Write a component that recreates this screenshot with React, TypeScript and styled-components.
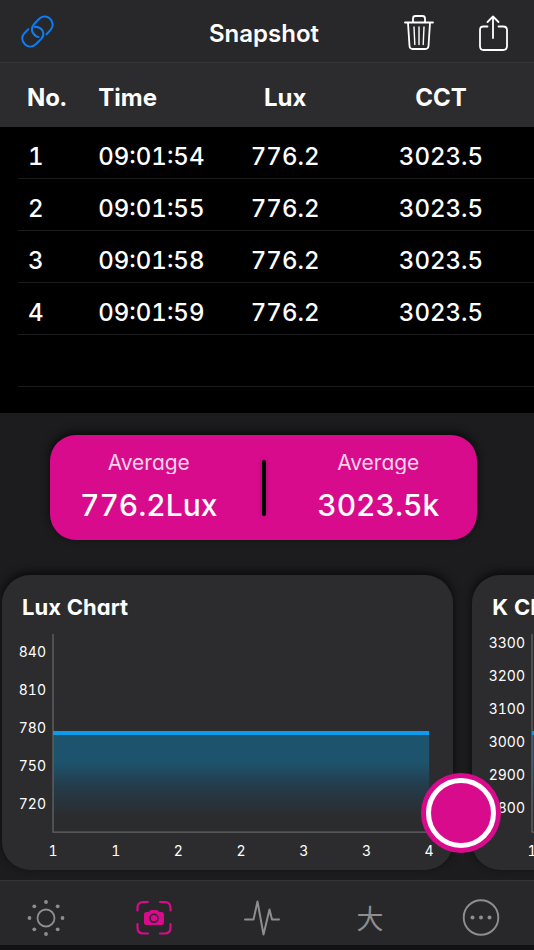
import React from "react";
import styled, { createGlobalStyle } from "styled-components";

const pink = "#d80b8c";
const hand = `"Chalkboard SE", Inter, "Open Sans", sans-serif`;

const GlobalStyle = createGlobalStyle`
  *, *::before { box-sizing: border-box; }
  body { margin: 0; background: #1c1c1e; color: #fff; font-family: ${hand}; font-feature-settings: "cv11", "tnum"; }
  button { border: 0; padding: 0; background: none; color: inherit; font: inherit; cursor: pointer; }
`;

const Page = styled.div`
  min-height: 100vh;
  display: flex;
  flex-direction: column;
  overflow: hidden;
`;

const TopBar = styled.header`
  height: 63px;
  padding: 0 24px 0 18px;
  display: grid;
  grid-template-columns: 1fr auto 1fr;
  align-items: center;
  background: #28282a;
  border-bottom: 1px solid #353537;
`;

const Title = styled.h1`
  margin: 5px 0 0;
  font: 600 24px/32px Inter, sans-serif;
`;

const Actions = styled.div<{ $end?: boolean }>`
  display: flex;
  gap: 40px;
  justify-content: ${(p) => (p.$end ? "flex-end" : "flex-start")};
`;

const IconButton = styled.button`
  height: 40px;
  margin-top: 2px;
  svg { display: block; }
`;

const TableArea = styled.section`
  background: #000;
  height: 350px;
`;

const Table = styled.table`
  width: 100%;
  table-layout: fixed;
  border-collapse: collapse;
  font-size: 24px;
  line-height: 32px;
  thead { background: #2c2c2e; }
  tbody tr {
    background: linear-gradient(#1b1b1d, #1b1b1d) right bottom / calc(100% - 18px) 1px no-repeat;
  }
`;

const Th = styled.th<{ $w?: string; $center?: boolean }>`
  width: ${(p) => p.$w ?? "auto"};
  height: 64px;
  padding: 5px 0 0;
  font-weight: 700;
  text-align: ${(p) => (p.$center ? "center" : "left")};
  &:first-child { padding-left: 27px; }
  &:last-child { padding-right: 12px; }
`;

const Td = styled.td<{ $center?: boolean }>`
  height: 52px;
  padding: 7px 0 0;
  font-weight: 500;
  text-align: ${(p) => (p.$center ? "center" : "left")};
  &:first-child { padding-left: 28px; }
  &:last-child { padding-right: 12px; }
`;

const Summary = styled.section`
  height: 105px;
  margin: 22px 57px 0 50px;
  display: grid;
  grid-template-columns: 1fr 4px 1fr;
  align-items: center;
  background: ${pink};
  border-radius: 26px;
  box-shadow: 0 -3px 8px #0a0a0b;
`;

const Divider = styled.div`
  height: 56px;
  border-radius: 2px;
  background: #000;
  box-shadow: 0 0 4px rgba(0, 0, 0, 0.3);
`;

const Stat = styled.div<{ $side: "left" | "right" }>`
  text-align: center;
  padding-${(p) => (p.$side === "left" ? "right" : "left")}: 14px;
`;

const StatLabel = styled.div`
  height: 24px;
  overflow: hidden;
  font-size: 21px;
  line-height: 26px;
  color: #f6d3e8;
`;

const StatValue = styled.div`
  margin-top: 11px;
  font-size: 30px;
  line-height: 40px;
  font-weight: 500;
`;

const Charts = styled.section`
  position: relative;
  margin-top: 35px;
  padding: 0 0 10px 2px;
  display: flex;
  gap: 19px;
`;

const Card = styled.article`
  flex: 0 0 calc(85% - 1px);
  background: #2c2c2e;
  border-radius: 28px;
  box-shadow: 0 -3px 8px #0a0a0b;
  overflow: hidden;
  svg { display: block; width: 100%; }
`;

const CardTitle = styled.h2`
  margin: 18px 20px 0;
  font-size: 22px;
  line-height: 28px;
  font-weight: 700;
`;

const Shutter = styled.button`
  position: absolute;
  right: 33px;
  bottom: 27px;
  width: 80px;
  height: 80px;
  display: grid;
  place-items: center;
  background: ${pink};
  border-radius: 50%;
  &::before {
    content: "";
    width: 70px;
    height: 70px;
    border: 5px solid #fff;
    border-radius: 50%;
  }
`;

const TabBar = styled.nav`
  height: 70px;
  margin-top: auto;
  display: grid;
  grid-template-columns: 100fr 108fr 108fr 108fr 110fr;
  background: #28282a;
  border-top: 1px solid #353537;
  border-bottom: 5px solid #121214;
`;

const Tab = styled.button<{ $active?: boolean }>`
  display: flex;
  justify-content: center;
  align-items: center;
  padding-top: 9px;
  color: ${(p) => (p.$active ? pink : "#8e8e91")};
  &:first-child { padding-right: 8px; }
  &:last-child { padding-left: 4px; }
`;

const Glyph = styled.span`
  font: 400 27px/36px "Noto Sans CJK SC", sans-serif;
`;

const LinkIcon = () => (
  <svg width="40" height="40" viewBox="0 0 40 40" fill="none" stroke="#0f7df2" strokeWidth="2" strokeLinecap="round">
    <path d="M17.2 23.4C12.7 20 13.3 15.6 16.1 12.2L20.5 7.5C23.7 4.2 28.3 3.4 31.6 6.3C35.5 9.6 35.7 14.5 32.6 17.9L28.6 22.2" />
    <path d="M20 15.2C26 17.4 26.7 23 23.5 26.6L18.4 31.8C14.8 35.3 10.3 35.4 7.1 32.5C3.5 29.2 3.3 24.6 6.4 21.2L10.4 17.1" />
    <path d="M17.2 23.4Q18.6 24.7 20.5 25M20 15.2Q18.4 14.6 16.8 15" />
  </svg>
);

const TrashIcon = () => (
  <svg width="34" height="40" viewBox="0 0 34 40" fill="none" stroke="#fff" strokeWidth="1.8" strokeLinecap="round" strokeLinejoin="round">
    <path d="M3 10.5H31M11 10V6.5Q11 4 13.5 4H20.5Q23 4 23 6.5V10M6 11L7.5 34Q7.8 37 10.5 37H23.5Q26.2 37 26.5 34L28 11" />
    <path d="M12 15L12.8 32.5M17 15V32.5M22 15L21.2 32.5" strokeWidth="1.4" />
  </svg>
);

const ShareIcon = () => (
  <svg width="34" height="40" viewBox="0 0 34 40" fill="none" stroke="#fff" strokeWidth="1.8" strokeLinecap="round" strokeLinejoin="round">
    <path d="M11.5 14.5H7.5Q4 14.5 4 18V34Q4 38 7.5 38H27Q31 38 31 34V18Q31 14.5 27 14.5H22.5M17 26V4.5M11.5 10L17 4.5L22.5 10" />
  </svg>
);

const SunIcon = () => (
  <svg width="38" height="38" viewBox="0 0 38 38" fill="currentColor">
    <circle cx="19" cy="19" r="8.5" fill="none" stroke="currentColor" strokeWidth="1.8" />
    {[[19, 3], [30.7, 7.3], [35.5, 19], [30.7, 30.3], [19, 35], [7.3, 30.3], [2.5, 19], [7.3, 7.3]].map(([x, y]) => (
      <circle key={`${x}-${y}`} cx={x} cy={y} r="1.9" />
    ))}
  </svg>
);

const CameraIcon = () => (
  <svg width="36" height="36" viewBox="0 0 36 36" fill="none" stroke="currentColor" strokeWidth="2.2" strokeLinecap="round">
    <path d="M1.5 10.5V8Q1.5 2 7.5 2H12M24 2H28.5Q34.5 2 34.5 8V10.5M34.5 24V27.5Q34.5 33.5 28.5 33.5H24M12 33.5H7.5Q1.5 33.5 1.5 27.5V24" />
    <path d="M8 14.5Q8 12 10.5 12H12.5L15 10H21L23.5 12H25.5Q28 12 28 14.5V22.5Q28 25 25.5 25H10.5Q8 25 8 22.5Z" fill="currentColor" stroke="none" />
    <circle cx="18" cy="18.3" r="4" stroke="#28282a" strokeWidth="1.5" />
  </svg>
);

const PulseIcon = () => (
  <svg width="38" height="38" viewBox="0 0 38 38" fill="none" stroke="currentColor" strokeWidth="2" strokeLinecap="round" strokeLinejoin="round">
    <path d="M2 20.5H10.5L14.5 2.5L20.5 35.5L26.5 10.5L29 20.5H36" />
  </svg>
);

const MoreIcon = () => (
  <svg width="38" height="38" viewBox="0 0 38 38" fill="currentColor">
    <circle cx="19" cy="18.5" r="17.3" fill="none" stroke="currentColor" strokeWidth="1.9" />
    <circle cx="10.5" cy="18.5" r="2" /><circle cx="19" cy="18.5" r="2" /><circle cx="27.5" cy="18.5" r="2" />
  </svg>
);

type ChartProps = { id: string; title: string; axis: number; first: number; step: number; labels: number[] };

const xLabels = [1, 1, 2, 2, 3, 3, 4];

const Chart = ({ id, title, axis, first, step, labels }: ChartProps) => {
  const end = 427;
  const gap = (end - axis) / (xLabels.length - 1);
  return (
    <Card>
      <CardTitle>{title}</CardTitle>
      <svg viewBox="0 0 451 249" role="img" aria-label={title} fill="#fff" fontSize="14">
        <defs>
          <linearGradient id={id} x1="0" y1="0" x2="0" y2="1">
            <stop offset="0" stopColor="#1e536d" />
            <stop offset="0.3" stopColor="#1e536d" />
            <stop offset="0.55" stopColor="#243b49" />
            <stop offset="0.85" stopColor="#2b2c2f" />
            <stop offset="1" stopColor="#2c2c2e" />
          </linearGradient>
        </defs>
        <rect x={axis} y="112" width={end - axis} height="98" fill={`url(#${id})`} />
        <path d={`M${axis} 13V211H${end}`} fill="none" stroke="#646467" strokeWidth="1.3" />
        <path d={`M${axis} 112H${end}`} stroke="#0d9cec" strokeWidth="4" />
        {labels.map((v, i) => (
          <text key={v} x={axis - 7} y={first + i * step} textAnchor="end">{v}</text>
        ))}
        {xLabels.map((v, i) => (
          <text key={i} x={axis + i * gap} y="235" textAnchor="middle">{v}</text>
        ))}
      </svg>
    </Card>
  );
};

const rows = ["09:01:54", "09:01:55", "09:01:58", "09:01:59"];

export default function App() {
  return (
    <Page>
      <GlobalStyle />
      <TopBar>
        <Actions><IconButton aria-label="Link"><LinkIcon /></IconButton></Actions>
        <Title>Snapshot</Title>
        <Actions $end>
          <IconButton aria-label="Delete"><TrashIcon /></IconButton>
          <IconButton aria-label="Share"><ShareIcon /></IconButton>
        </Actions>
      </TopBar>
      <TableArea>
        <Table>
          <thead>
            <tr><Th $w="18.4%">No.</Th><Th $w="21%">Time</Th><Th $w="28%" $center>Lux</Th><Th $center>CCT</Th></tr>
          </thead>
          <tbody>
            {rows.map((time, i) => (
              <tr key={time}><Td>{i + 1}</Td><Td>{time}</Td><Td $center>776.2</Td><Td $center>3023.5</Td></tr>
            ))}
            <tr><Td colSpan={4} /></tr>
          </tbody>
        </Table>
      </TableArea>
      <Summary>
        <Stat $side="left"><StatLabel>Average</StatLabel><StatValue>776.2Lux</StatValue></Stat>
        <Divider />
        <Stat $side="right"><StatLabel>Average</StatLabel><StatValue>3023.5k</StatValue></Stat>
      </Summary>
      <Charts>
        <Chart id="lux" title="Lux Chart" axis={51} first={36} step={38} labels={[840, 810, 780, 750, 720]} />
        <Chart id="kelvin" title="K Chart" axis={60} first={27} step={33} labels={[3300, 3200, 3100, 3000, 2900, 2800]} />
        <Shutter aria-label="Take snapshot" />
      </Charts>
      <TabBar>
        <Tab aria-label="Light"><SunIcon /></Tab>
        <Tab aria-label="Snapshot" $active><CameraIcon /></Tab>
        <Tab aria-label="Flicker"><PulseIcon /></Tab>
        <Tab><Glyph>大</Glyph></Tab>
        <Tab aria-label="More"><MoreIcon /></Tab>
      </TabBar>
    </Page>
  );
}
